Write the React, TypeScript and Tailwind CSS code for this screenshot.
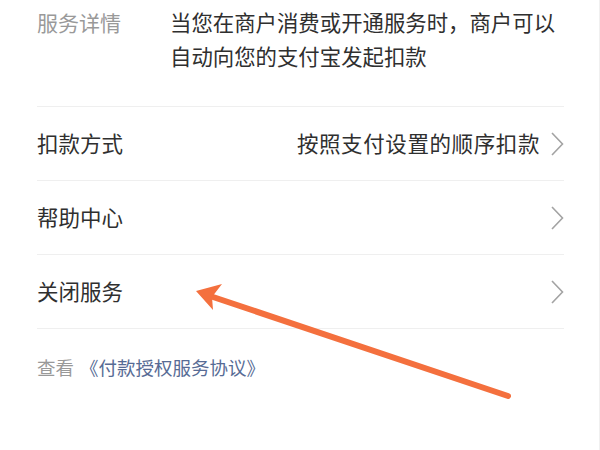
const font = { fontFamily: '"Noto Sans CJK SC", "Noto Sans", sans-serif' };

const Chevron = () => (
  <svg width="14" height="26" viewBox="0 0 14 26" className="shrink-0">
    <path d="M2 2 L12.5 13 L2 24" fill="none" stroke="#a3a3a3" strokeWidth="1.6" />
  </svg>
);

const Row = ({ label, value }: { label: string; value?: string }) => (
  <div className="flex h-[74px] items-center justify-between border-b border-[#efefef]">
    <span className="text-[21.5px] text-[#2f2f2f]">{label}</span>
    <div className="flex items-center gap-[10px]">
      {value && <span className="text-[21.5px] tracking-[0.6px] text-[#2f2f2f]">{value}</span>}
      <Chevron />
    </div>
  </div>
);

export default function App() {
  return (
    <div
      className="relative h-[450px] w-[600px] overflow-hidden border-r border-[#f0f0f0] bg-white"
      style={font}
    >
      <div className="pl-[37px] pr-[35px]">
        <div className="flex border-b border-[#efefef] pb-[33px] pt-[5px] leading-[34px]">
          <span className="w-[133px] shrink-0 text-[21px] text-[#999999]">服务详情</span>
          <p className="text-[21.4px] text-[#2f2f2f]">
            当您在商户消费或开通服务时，商户可以自动向您的支付宝发起扣款
          </p>
        </div>
        <Row label="扣款方式" value="按照支付设置的顺序扣款" />
        <Row label="帮助中心" />
        <Row label="关闭服务" />
        <div className="pt-[25px] text-[18.5px]">
          <span className="text-[#999999]">查看</span>
          <span className="ml-[6px] text-[#576b95]">《付款授权服务协议》</span>
        </div>
      </div>

      <svg className="pointer-events-none absolute left-0 top-0" width="600" height="450">
        <line x1="508" y1="396" x2="210" y2="296" stroke="#f4703e" strokeWidth="6" strokeLinecap="round" />
        <polygon points="196,291 222,284 212,297 213,310" fill="#f4703e" />
      </svg>
    </div>
  );
}
